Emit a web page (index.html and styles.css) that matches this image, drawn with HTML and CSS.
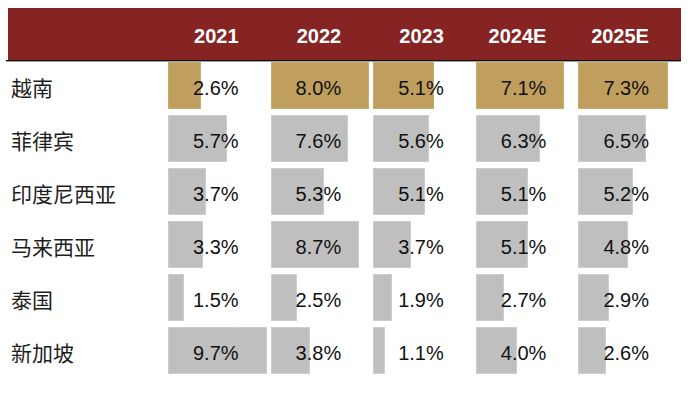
FILE: index.html
```html
<!DOCTYPE html>
<html lang="zh-CN">
<head>
<meta charset="utf-8">
<title>东南亚经济增速</title>
<link rel="stylesheet" href="styles.css">
</head>
<body>
<div class="table">
  <div class="head">
    <div class="hcell"></div>
    <div class="hcell">2021</div>
    <div class="hcell">2022</div>
    <div class="hcell">2023</div>
    <div class="hcell">2024E</div>
    <div class="hcell">2025E</div>
  </div>
  <div class="rule"></div>
  <div class="body">
    <div class="label">越南</div>
    <div class="cell hl"><span class="bar" style="width:33px"></span><span class="val">2.6%</span></div>
    <div class="cell hl"><span class="bar" style="width:98px"></span><span class="val">8.0%</span></div>
    <div class="cell hl"><span class="bar" style="width:61px"></span><span class="val">5.1%</span></div>
    <div class="cell hl"><span class="bar" style="width:88px"></span><span class="val">7.1%</span></div>
    <div class="cell hl"><span class="bar" style="width:90px"></span><span class="val">7.3%</span></div>

    <div class="label">菲律宾</div>
    <div class="cell"><span class="bar" style="width:59px"></span><span class="val">5.7%</span></div>
    <div class="cell"><span class="bar" style="width:77.5px"></span><span class="val">7.6%</span></div>
    <div class="cell"><span class="bar" style="width:56px"></span><span class="val">5.6%</span></div>
    <div class="cell"><span class="bar" style="width:64px"></span><span class="val">6.3%</span></div>
    <div class="cell"><span class="bar" style="width:67.5px"></span><span class="val">6.5%</span></div>

    <div class="label">印度尼西亚</div>
    <div class="cell"><span class="bar" style="width:37.5px"></span><span class="val">3.7%</span></div>
    <div class="cell"><span class="bar" style="width:53.5px"></span><span class="val">5.3%</span></div>
    <div class="cell"><span class="bar" style="width:52px"></span><span class="val">5.1%</span></div>
    <div class="cell"><span class="bar" style="width:52.5px"></span><span class="val">5.1%</span></div>
    <div class="cell"><span class="bar" style="width:54.5px"></span><span class="val">5.2%</span></div>

    <div class="label">马来西亚</div>
    <div class="cell"><span class="bar" style="width:34.5px"></span><span class="val">3.3%</span></div>
    <div class="cell"><span class="bar" style="width:88.5px"></span><span class="val">8.7%</span></div>
    <div class="cell"><span class="bar" style="width:37.5px"></span><span class="val">3.7%</span></div>
    <div class="cell"><span class="bar" style="width:52.5px"></span><span class="val">5.1%</span></div>
    <div class="cell"><span class="bar" style="width:49.5px"></span><span class="val">4.8%</span></div>

    <div class="label">泰国</div>
    <div class="cell"><span class="bar" style="width:15.5px"></span><span class="val">1.5%</span></div>
    <div class="cell"><span class="bar" style="width:26px"></span><span class="val">2.5%</span></div>
    <div class="cell"><span class="bar" style="width:19px"></span><span class="val">1.9%</span></div>
    <div class="cell"><span class="bar" style="width:28px"></span><span class="val">2.7%</span></div>
    <div class="cell"><span class="bar" style="width:30.5px"></span><span class="val">2.9%</span></div>

    <div class="label">新加坡</div>
    <div class="cell"><span class="bar" style="width:99px"></span><span class="val">9.7%</span></div>
    <div class="cell"><span class="bar" style="width:39.5px"></span><span class="val">3.8%</span></div>
    <div class="cell"><span class="bar" style="width:12px"></span><span class="val">1.1%</span></div>
    <div class="cell"><span class="bar" style="width:41px"></span><span class="val">4.0%</span></div>
    <div class="cell"><span class="bar" style="width:27.5px"></span><span class="val">2.6%</span></div>
  </div>
</div>
</body>
</html>
```
FILE: styles.css
```css
html, body {
  margin: 0;
  padding: 0;
  background: #ffffff;
}

body {
  padding: 8px;
  font-family: "Liberation Sans", Arial, "Noto Sans CJK SC", sans-serif;
}

.table {
  width: 673px;
}

.head,
.body {
  display: grid;
  grid-template-columns: 160px repeat(5, 102.6px);
}

.head {
  height: 52px;
  background: #862424;
}

.hcell {
  color: #ffffff;
  font-weight: bold;
  font-size: 20px;
  line-height: 52px;
  padding-top: 2px;
  padding-right: 32px;
  text-align: right;
}

.rule {
  height: 1px;
  margin-left: -2px;
  background: #111111;
  border-bottom: 1px solid #a0a0a0;
}

.body {
  grid-auto-rows: 53px;
}

.label {
  font-family: "Noto Sans CJK SC", sans-serif;
  font-size: 21px;
  color: #1e1e1e;
  line-height: 47px;
  padding-left: 3px;
  padding-top: 2px;
}

.cell {
  position: relative;
  height: 47px;
}

.bar {
  position: absolute;
  left: 0;
  top: 0;
  height: 47px;
  box-sizing: border-box;
  background: #bfbfbf;
  border: 1px solid #cdcdcd;
}

.cell.hl .bar {
  background: #bf9e5e;
  border-color: #c9ab70;
}

.val {
  position: relative;
  display: block;
  font-size: 20px;
  color: #111111;
  line-height: 47px;
  padding-top: 2.5px;
  padding-right: 32px;
  text-align: right;
}
```
